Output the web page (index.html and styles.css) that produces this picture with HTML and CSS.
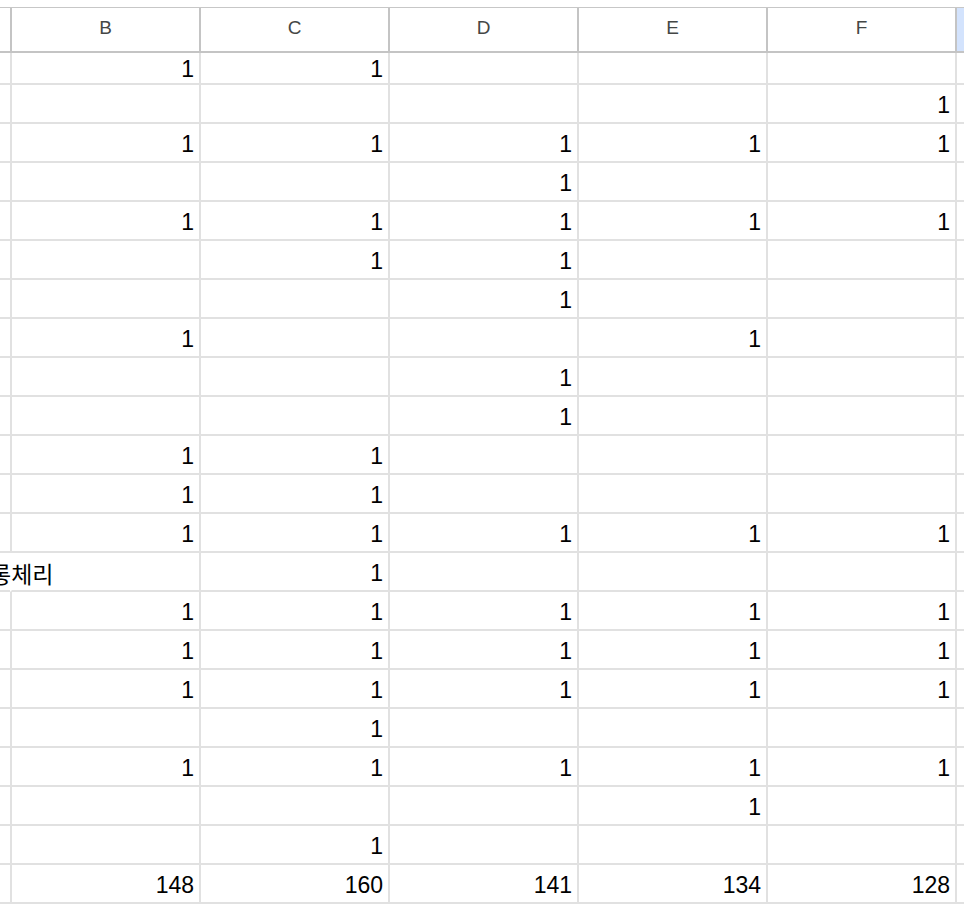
FILE: index.html
```html
<!DOCTYPE html>
<html lang="ko">
<head>
<meta charset="utf-8">
<title>Sheet</title>
<link rel="stylesheet" href="styles.css">
</head>
<body>
<div class="sheet">
  <div class="hd hd-a"></div><div class="hd">B</div><div class="hd">C</div><div class="hd">D</div><div class="hd">E</div><div class="hd">F</div><div class="hd hd-sel"></div>

  <div class="a r1"></div><div class="c r1">1</div><div class="c r1">1</div><div class="c r1"></div><div class="c r1"></div><div class="c r1"></div><div class="c g r1"></div>
  <div class="a"></div><div class="c"></div><div class="c"></div><div class="c"></div><div class="c"></div><div class="c">1</div><div class="c g"></div>
  <div class="a"></div><div class="c">1</div><div class="c">1</div><div class="c">1</div><div class="c">1</div><div class="c">1</div><div class="c g"></div>
  <div class="a"></div><div class="c"></div><div class="c"></div><div class="c">1</div><div class="c"></div><div class="c"></div><div class="c g"></div>
  <div class="a"></div><div class="c">1</div><div class="c">1</div><div class="c">1</div><div class="c">1</div><div class="c">1</div><div class="c g"></div>
  <div class="a"></div><div class="c"></div><div class="c">1</div><div class="c">1</div><div class="c"></div><div class="c"></div><div class="c g"></div>
  <div class="a"></div><div class="c"></div><div class="c"></div><div class="c">1</div><div class="c"></div><div class="c"></div><div class="c g"></div>
  <div class="a"></div><div class="c">1</div><div class="c"></div><div class="c"></div><div class="c">1</div><div class="c"></div><div class="c g"></div>
  <div class="a"></div><div class="c"></div><div class="c"></div><div class="c">1</div><div class="c"></div><div class="c"></div><div class="c g"></div>
  <div class="a"></div><div class="c"></div><div class="c"></div><div class="c">1</div><div class="c"></div><div class="c"></div><div class="c g"></div>
  <div class="a"></div><div class="c">1</div><div class="c">1</div><div class="c"></div><div class="c"></div><div class="c"></div><div class="c g"></div>
  <div class="a"></div><div class="c">1</div><div class="c">1</div><div class="c"></div><div class="c"></div><div class="c"></div><div class="c g"></div>
  <div class="a"></div><div class="c">1</div><div class="c">1</div><div class="c">1</div><div class="c">1</div><div class="c">1</div><div class="c g"></div>
  <div class="a a-text"><span class="label">롱체리</span></div><div class="c no-left"></div><div class="c">1</div><div class="c"></div><div class="c"></div><div class="c"></div><div class="c g"></div>
  <div class="a"></div><div class="c">1</div><div class="c">1</div><div class="c">1</div><div class="c">1</div><div class="c">1</div><div class="c g"></div>
  <div class="a"></div><div class="c">1</div><div class="c">1</div><div class="c">1</div><div class="c">1</div><div class="c">1</div><div class="c g"></div>
  <div class="a"></div><div class="c">1</div><div class="c">1</div><div class="c">1</div><div class="c">1</div><div class="c">1</div><div class="c g"></div>
  <div class="a"></div><div class="c"></div><div class="c">1</div><div class="c"></div><div class="c"></div><div class="c"></div><div class="c g"></div>
  <div class="a"></div><div class="c">1</div><div class="c">1</div><div class="c">1</div><div class="c">1</div><div class="c">1</div><div class="c g"></div>
  <div class="a"></div><div class="c"></div><div class="c"></div><div class="c"></div><div class="c">1</div><div class="c"></div><div class="c g"></div>
  <div class="a"></div><div class="c"></div><div class="c">1</div><div class="c"></div><div class="c"></div><div class="c"></div><div class="c g"></div>
  <div class="a"></div><div class="c">148</div><div class="c">160</div><div class="c">141</div><div class="c">134</div><div class="c">128</div><div class="c g"></div>
</div>
</body>
</html>
```
FILE: styles.css
```css
html, body {
  margin: 0;
  padding: 0;
  background: #ffffff;
  overflow: hidden;
}
.sheet {
  display: grid;
  grid-template-columns: 10px repeat(5, 189px) 1fr;
  margin-top: 7px;
  border-top: 1px solid #c7c7c7;
  font-family: "Liberation Sans", Arial, sans-serif;
}
.hd {
  height: 45px;
  box-sizing: border-box;
  border-bottom: 2px solid #c4c4c4;
  border-left: 2px solid #c4c4c4;
  display: flex;
  align-items: center;
  justify-content: center;
  padding-bottom: 3px;
  font-size: 19px;
  color: #444746;
}
.hd-a {
  border-left: none;
}
.hd-sel {
  background: #d3e3fd;
}
.a, .c {
  height: 39px;
  box-sizing: border-box;
  border-bottom: 2px solid #e1e1e1;
}
.c {
  border-left: 2px solid #e1e1e1;
  display: flex;
  align-items: center;
  justify-content: flex-end;
  padding-top: 3px;
  padding-right: 5px;
  font-size: 23px;
  color: #000000;
}
.r1 {
  height: 32px;
}
.c.r1 {
  padding-top: 2px;
}
.no-left {
  border-left-color: transparent;
}
.a-text {
  position: relative;
  z-index: 1;
  display: flex;
  align-items: center;
  padding-top: 2px;
  white-space: nowrap;
}
.label {
  flex: none;
  margin-left: -10px;
  font-family: "Noto Sans CJK KR", "Noto Sans", sans-serif;
  font-size: 23px;
  color: #000000;
}
```
